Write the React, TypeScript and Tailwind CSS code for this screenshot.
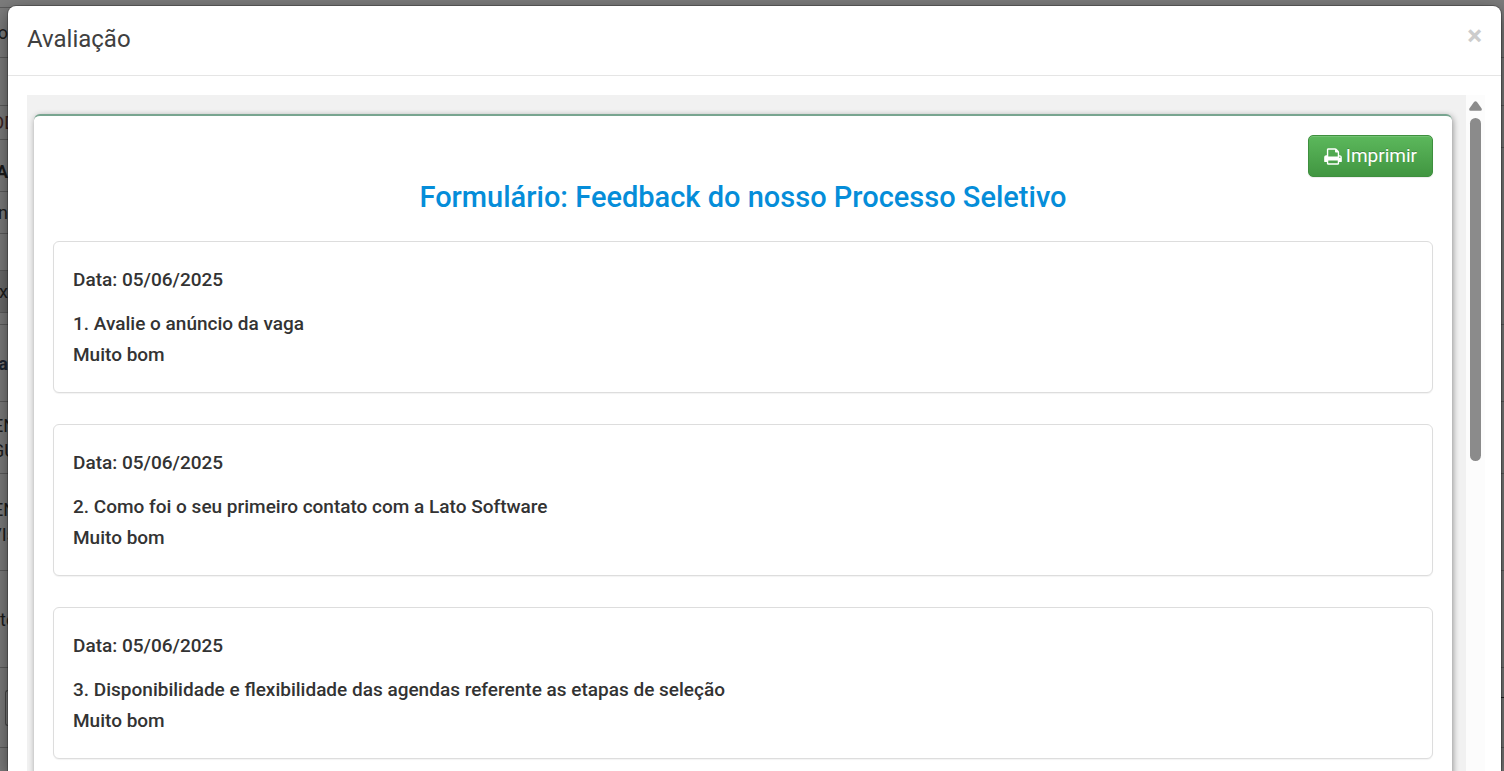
import type { ReactNode } from "react";

type Question = { id: number; date: string; text: string; answer: string };

const questions: Question[] = [
  { id: 1, date: "05/06/2025", text: "Avalie o anúncio da vaga", answer: "Muito bom" },
  { id: 2, date: "05/06/2025", text: "Como foi o seu primeiro contato com a Lato Software", answer: "Muito bom" },
  {
    id: 3,
    date: "05/06/2025",
    text: "Disponibilidade e flexibilidade das agendas referente as etapas de seleção",
    answer: "Muito bom",
  },
];

function PrintIcon() {
  return (
    <svg viewBox="64 0 1664 1792" className="h-[19px] w-[18px] fill-current" aria-hidden="true">
      <path d="M448 1536h896v-256h-896v256zm0-640h896v-384h-160q-40 0-68-28t-28-68v-160h-640v640zm1152 64q0-26-19-45t-45-19-45 19-19 45 19 45 45 19 45-19 19-45zm128 0v416q0 13-9.5 22.5t-22.5 9.5h-224v160q0 40-28 68t-68 28h-960q-40 0-68-28t-28-68v-160h-224q-13 0-22.5-9.5t-9.5-22.5v-416q0-79 56.5-135.5t135.5-56.5h64v-544q0-40 28-68t68-28h672q40 0 88 20t76 48l152 152q28 28 48 76t20 88v256h64q79 0 135.5 56.5t56.5 135.5z" />
    </svg>
  );
}

function Row({ className, children }: { className: string; children?: ReactNode }) {
  return (
    <div className={`flex shrink-0 flex-col justify-center border-b border-[#5c5c5c] ${className}`}>{children}</div>
  );
}

function PageBehind() {
  return (
    <div className="flex h-full justify-between bg-[#7c7c7c] text-[18px] leading-[25px] text-[#1c1c1c]" aria-hidden="true">
      <div className="flex w-4 flex-col overflow-hidden">
        <Row className="h-2" />
        <Row className="h-[50px] items-end pr-2">o</Row>
        <Row className="h-12" />
        <Row className="h-[34px] items-end text-[#3b2222]">OD</Row>
        <Row className="h-[52px] items-end pt-3 pr-2 font-bold">A</Row>
        <Row className="h-[42px] items-end pr-2">n</Row>
        <Row className="h-[37px]" />
        <Row className="h-[42px] items-end bg-[#6c6c6c] pr-2">x</Row>
        <Row className="h-3" />
        <Row className="h-[77px] items-end pr-2 font-bold text-[#1c2430]">a</Row>
        <Row className="h-[72px] items-end">
          <span>EN</span>
          <span>GU</span>
        </Row>
        <Row className="h-[97px] items-end">
          <span>EN</span>
          <span>/Is</span>
        </Row>
        <Row className="h-[97px]">te</Row>
        <Row className="h-20 items-end pr-2">
          <span className="h-9 w-[3px] rounded-l border border-r-0 border-[#4a4a4a]" />
        </Row>
        <Row className="h-10" />
      </div>
      <div className="flex w-[3px] flex-col overflow-hidden">
        <Row className="h-[58px]" />
        <Row className="h-12" />
        <Row className="h-[42px]" />
        <Row className="h-[177px]" />
        <Row className="h-[77px]" />
        <Row className="h-[72px]" />
        <Row className="h-[97px]" />
        <Row className="h-[97px]" />
        <Row className="h-[30px] border-[#222222]" />
        <Row className="h-[50px]" />
        <Row className="h-10" />
      </div>
    </div>
  );
}

function QuestionCard({ question }: { question: Question }) {
  return (
    <li className="rounded-md border border-[#dddddd] bg-white px-[19px] py-[22px] text-[19px] leading-[31px] font-medium text-[#333333] shadow-[0_1px_1px_rgba(0,0,0,0.05)]">
      <p className="mb-[13px]">Data: {question.date}</p>
      <h3>
        {question.id}. {question.text}
      </h3>
      <p>{question.answer}</p>
    </li>
  );
}

function ScrollTrack() {
  return (
    <div className="flex w-[19px] shrink-0 flex-col items-center bg-[#fcfcfc] pt-[6px]" aria-hidden="true">
      <svg viewBox="0 0 13 10" className="h-[10px] w-[13px] fill-[#8b8b8b]">
        <path d="M5 .9Q6.5-.6 8 .9L12.6 7.6Q13.4 9.8 11.4 9.8H1.6Q-.4 9.8.4 7.6Z" />
      </svg>
      <div className="mt-[7px] h-[343px] w-[11px] rounded-full bg-[#8b8b8b]" />
    </div>
  );
}

export default function App() {
  return (
    <div className="relative h-screen overflow-hidden font-['Roboto',sans-serif]">
      <PageBehind />
      <div className="absolute inset-0 pt-[6px] pr-[3px] pl-2">
        <div
          role="dialog"
          aria-labelledby="dialog-title"
          className="flex h-full flex-col rounded-t-lg bg-white shadow-[0_0_0_1px_rgba(0,0,0,0.25),0_6px_18px_rgba(0,0,0,0.5)]"
        >
          <header className="flex items-start justify-between border-b border-[#e5e5e5] px-[19px] pt-[17px] pb-[20px]">
            <h1 id="dialog-title" className="text-[24px] leading-8 text-[#404040]">
              Avaliação
            </h1>
            <button type="button" aria-label="Fechar" className="text-[28px] leading-[26px] font-bold text-[#cccccc]">
              ×
            </button>
          </header>
          <div className="flex min-h-0 flex-1 pt-[19px] pr-4 pl-[19px]">
            <div className="min-w-0 flex-1 overflow-hidden bg-[#f1f1f1] pt-[19px] pr-[14px] pl-[7px]">
              <section className="rounded-md border-t-2 border-[#78a590] bg-white px-[19px] pt-[19px] pb-8 shadow-[1px_2px_6px_rgba(0,0,0,0.4)]">
                <div className="flex justify-end">
                  <button
                    type="button"
                    className="flex h-[42px] items-center gap-1 rounded-[5px] border border-[#3e8f3e] bg-linear-to-b from-[#5cb85c] to-[#419641] px-[15px] text-[19px] leading-6 text-white shadow-[inset_0_1px_0_rgba(255,255,255,0.15),0_1px_1px_rgba(0,0,0,0.075)] [text-shadow:0_-1px_0_rgba(0,0,0,0.2)]"
                  >
                    <PrintIcon />
                    Imprimir
                  </button>
                </div>
                <h2 className="text-center text-[29px] leading-10 font-medium text-[#058dd9]">
                  Formulário: Feedback do nosso Processo Seletivo
                </h2>
                <ol className="mt-6 flex flex-col gap-[31px]">
                  {questions.map((question) => (
                    <QuestionCard key={question.id} question={question} />
                  ))}
                </ol>
              </section>
            </div>
            <ScrollTrack />
          </div>
        </div>
      </div>
    </div>
  );
}
